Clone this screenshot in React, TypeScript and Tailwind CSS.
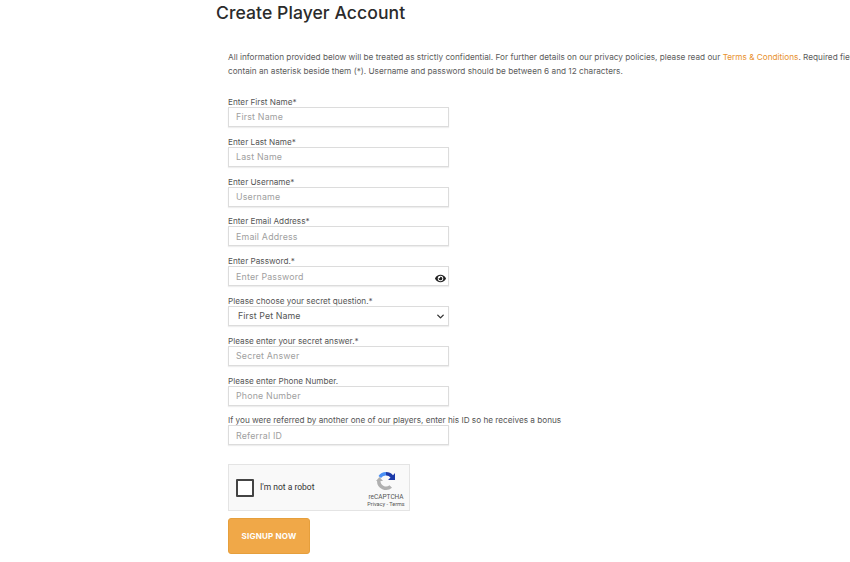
import React from "react";
import { ChevronDown } from "lucide-react";
import { FaEye } from "react-icons/fa";

const fields = [
  { label: "Enter First Name*", ph: "First Name" },
  { label: "Enter Last Name*", ph: "Last Name" },
  { label: "Enter Username*", ph: "Username" },
  { label: "Enter Email Address*", ph: "Email Address" },
];

function Label({ text }: { text: string }) {
  return <div className="h-[12px] pt-[1px] text-[8.2px] leading-[13px] text-[#555] whitespace-nowrap">{text}</div>;
}

function Field({ label, ph, eye }: { label: string; ph: string; eye?: boolean }) {
  return (
    <div className="h-[39.8px] flex flex-col">
      <Label text={label} />
      <div className="relative w-[221px] h-[20px] shrink-0 border border-[#dcdcdc] shadow-[0_1px_1px_#eeeeee] bg-white pl-[7px] flex items-center text-[8.8px] tracking-[0.2px] text-[#a0a0a0]">
        {ph}
        {eye && <FaEye size={11} className="absolute right-[2px] top-[6px] text-[#222]" />}
      </div>
    </div>
  );
}

export default function App() {
  return (
    <div className="w-[850px] h-[562px] overflow-hidden bg-white font-['Inter','Liberation_Sans',sans-serif]">
      <div className="pl-[216px] pt-[2px] h-[50px] text-[17.6px] leading-[22px] font-medium text-[#2b2b2b] tracking-[0.05px]">
        Create Player Account
      </div>
      <div className="pl-[228px] w-[880px] h-[45px] text-[8.23px] leading-[14px] text-[#5c5c5c] whitespace-nowrap">
        <div>
          All information provided below will be treated as strictly confidential. For further details on our privacy policies, please read our{" "}
          <span className="text-[#e8912d]">Terms &amp; Conditions</span>. Required fields
        </div>
        <div>contain an asterisk beside them (*). Username and password should be between 6 and 12 characters.</div>
      </div>
      <div className="pl-[228px]">
        {fields.map((f) => (
          <Field key={f.label} {...f} />
        ))}
        <Field label="Enter Password.*" ph="Enter Password" eye />
        <div className="h-[39.8px] flex flex-col">
          <Label text="Please choose your secret question.*" />
          <div className="relative w-[221px] h-[20px] shrink-0 border border-[#dcdcdc] shadow-[0_1px_1px_#eeeeee] bg-white pl-[9px] flex items-center text-[8.8px] tracking-[0.1px] text-[#555]">
            First Pet Name
            <ChevronDown size={11} strokeWidth={3} className="absolute right-[2px] top-[4px] text-[#333]" />
          </div>
        </div>
        <Field label="Please enter your secret answer.*" ph="Secret Answer" />
        <Field label="Please enter Phone Number." ph="Phone Number" />
        <Field label="If you were referred by another one of our players, enter his ID so he receives a bonus" ph="Referral ID" />
        <div className="mt-[11px] w-[182px] h-[47px] border border-[#e4e4e4] bg-[#f9f9f9] flex items-center relative font-['Roboto',sans-serif]">
          <div className="ml-[7px] w-[18px] h-[18px] border-2 border-[#444] bg-white rounded-[1px]" />
          <div className="ml-[6px] text-[8.5px] text-[#333]">I'm not a robot</div>
          <div className="absolute right-[5px] top-[6px] w-[36px] flex flex-col items-center">
            <svg width="20" height="20" viewBox="0 0 20 20">
              <path d="M10 1a9 9 0 0 1 7 3.3L19 2v7h-7l2.5-2.5A5.5 5.5 0 0 0 10 4.5z" fill="#1c3aa9" />
              <path d="M10 1a9 9 0 0 0-7.5 4L5 7a5.5 5.5 0 0 1 5-2.5z" fill="#4a90f5" />
              <path d="M1 10a9 9 0 0 0 15 6.7l-2.5-2.5A5.5 5.5 0 0 1 4.5 10H7L3.5 6 0 10z" fill="#b0b0b0" />
            </svg>
            <div className="text-[6.5px] leading-[8px] text-[#555] mt-[2px]">reCAPTCHA</div>
            <div className="text-[5.5px] leading-[7px] text-[#555] whitespace-nowrap">Privacy - Terms</div>
          </div>
        </div>
        <div className="mt-[7px] w-[82px] h-[36px] rounded-[3px] border border-[#e69f3c] bg-[#f0a848] flex items-center justify-center text-[8px] font-bold text-white tracking-[0.2px]">
          SIGNUP NOW
        </div>
      </div>
    </div>
  );
}
